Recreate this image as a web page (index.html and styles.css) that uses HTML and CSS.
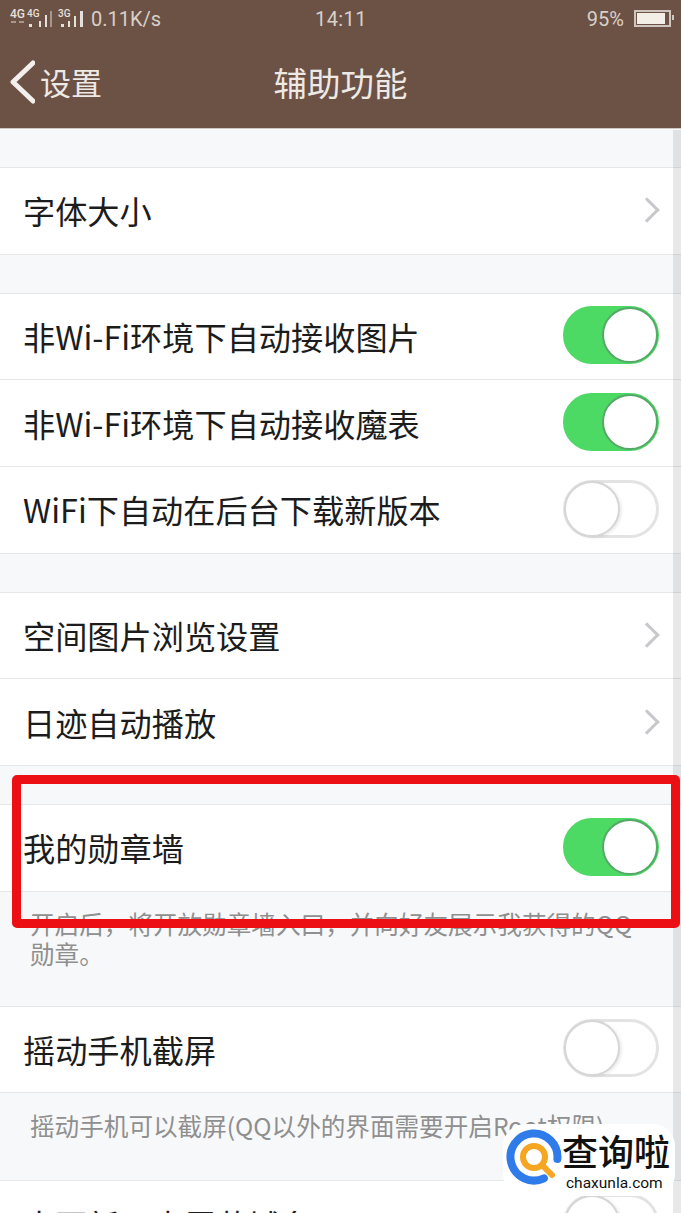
FILE: index.html
```html
<!DOCTYPE html>
<html lang="zh-CN">
<head>
  <meta charset="UTF-8" />
  <meta name="viewport" content="width=device-width, initial-scale=1.0"/>
  <title>辅助功能</title>
  <link rel="stylesheet" href="styles.css">
</head>
<body>

<header class="topbar">
  <div class="status">
    <div class="status-left">
      <svg class="signal" width="76" height="22" viewBox="0 -1 76 22">
        <text x="0" y="9" class="net">4G</text>
        <text x="17" y="8" class="net net-small">4G</text>
        <text x="48" y="8" class="net net-small">3G</text>
        <path d="M1 13h5M9 13h5" stroke="#a8978c" stroke-width="2"/>
        <g fill="#e6e0db">
          <rect x="19" y="15" width="3" height="3"/>
          <rect x="29" y="12" width="2" height="6"/>
          <rect x="35" y="6" width="2" height="12"/>
          <rect x="40" y="2" width="2" height="16" fill="#a8978c"/>
          <rect x="51" y="15" width="3" height="3"/>
          <rect x="58" y="12" width="2" height="6"/>
          <rect x="64" y="7" width="2" height="11"/>
          <rect x="70" y="2" width="3" height="16"/>
        </g>
      </svg>
      <span class="speed">0.11K/s</span>
    </div>
    <span class="clock">14:11</span>
    <div class="status-right">
      <span class="battery-text">95%</span>
      <span class="battery"><span class="battery-fill"></span></span>
    </div>
  </div>
  <div class="navbar">
    <div class="back">
      <svg width="26" height="44" viewBox="0 0 26 44"><path d="M24 3 L4 22 L24 41" fill="none" stroke="#f2efec" stroke-width="5" stroke-linecap="round" stroke-linejoin="round"/></svg>
      <span>设置</span>
    </div>
    <h1 class="title">辅助功能</h1>
  </div>
</header>

<main class="content">
  <section class="group">
    <div class="row"><span>字体大小</span><i class="chevron"></i></div>
  </section>

  <section class="group">
    <div class="row"><span>非Wi-Fi环境下自动接收图片</span><i class="switch on"></i></div>
    <div class="row"><span>非Wi-Fi环境下自动接收魔表</span><i class="switch on"></i></div>
    <div class="row"><span>WiFi下自动在后台下载新版本</span><i class="switch"></i></div>
  </section>

  <section class="group">
    <div class="row"><span>空间图片浏览设置</span><i class="chevron"></i></div>
    <div class="row"><span>日迹自动播放</span><i class="chevron"></i></div>
  </section>

  <section class="group">
    <div class="row"><span>我的勋章墙</span><i class="switch on"></i></div>
    <p class="note">开启后，将开放勋章墙入口，并向好友展示我获得的QQ勋章。</p>
  </section>

  <section class="group">
    <div class="row"><span>摇动手机截屏</span><i class="switch"></i></div>
    <p class="note note-short">摇动手机可以截屏(QQ以外的界面需要开启Root权限)</p>
  </section>

  <section class="group">
    <div class="row"><span>去更新不去屏幕域名</span><i class="switch"></i></div>
  </section>
</main>

<div class="scrollbar"></div>
<div class="highlight"></div>

<div class="watermark">
  <svg width="58" height="58" viewBox="0 0 58 58">
    <path d="M52.4 31 A23.5 23.5 0 1 0 38.9 50.3" fill="none" stroke="#2f7bea" stroke-width="8" stroke-linecap="round"/>
    <circle cx="29" cy="29" r="11" fill="#fff" stroke="#f5a623" stroke-width="6"/>
    <path d="M37 37 L47 47" stroke="#f5a623" stroke-width="6" stroke-linecap="round"/>
  </svg>
  <div class="wm-text">
    <strong>查询啦</strong>
    <span>chaxunla.com</span>
  </div>
</div>

</body>
</html>
```

FILE: styles.css
```css
html, body {
  margin: 0;
  padding: 0;
}

body {
  position: relative;
  height: 1213px;
  overflow: hidden;
  background-color: #f7f8fa;
  font-family: "Noto Sans CJK SC", "Liberation Sans", sans-serif;
  color: #1c1c1c;
}

/* top brown bar */
.topbar {
  height: 128px;
  background-color: #6c5245;
  border-bottom: 1px solid #cfc9c4;
  color: #eee9e5;
}

.status {
  height: 37px;
  display: grid;
  grid-template-columns: 1fr auto 1fr;
  align-items: center;
  padding: 0 4px 0 10px;
  font-family: "Roboto", "Liberation Sans", sans-serif;
  font-size: 20px;
  color: #d8d0ca;
}

.status-left {
  display: flex;
  align-items: center;
  gap: 5px;
}

.net {
  font-size: 12px;
  font-weight: 500;
  fill: #e6e0db;
}

.net-small {
  font-size: 10px;
}

.clock {
  margin-left: -5px;
  letter-spacing: 0.4px;
}

.status-right {
  display: flex;
  justify-content: flex-end;
  align-items: center;
  gap: 10px;
  padding-right: 6px;
}

.battery {
  position: relative;
  display: block;
  width: 31px;
  height: 11px;
  border: 2px solid #cfc6bf;
  padding: 1px;
}

.battery::after {
  content: "";
  position: absolute;
  right: -5px;
  top: 3px;
  width: 2px;
  height: 5px;
  background-color: #cfc6bf;
}

.battery-fill {
  display: block;
  width: 28px;
  height: 100%;
  background-color: #f3efe6;
}

.navbar {
  position: relative;
  height: 91px;
  display: flex;
  align-items: center;
  justify-content: center;
}

.title {
  margin: 0 0 2px;
  font-size: 33.5px;
  font-weight: 400;
}

.back {
  position: absolute;
  left: 9px;
  top: 22px;
  display: flex;
  align-items: center;
  gap: 5px;
  font-size: 31px;
}

/* settings list */
.content {
  padding-top: 38px;
}

.group {
  margin-bottom: 38px;
}

.group:has(.note) {
  margin-bottom: 0;
}

.row {
  box-sizing: border-box;
  height: 86.67px;
  display: flex;
  align-items: center;
  justify-content: space-between;
  padding: 0 22px 1px 23px;
  background-color: #fff;
  border-top: 1px solid #e6e7e9;
  font-size: 32.2px;
}

.group > .row:last-of-type {
  height: 87.67px;
  border-bottom: 1px solid #e6e7e9;
}

.note {
  margin: 0;
  padding: 16px 40px 38px 30px;
  font-size: 24.6px;
  line-height: 30px;
  color: #8f8f8f;
}

.note-short {
  padding: 17px 0 40px 30px;
  white-space: nowrap;
}

.chevron {
  width: 15px;
  height: 15px;
  margin-right: 3px;
  border-top: 3px solid #c8c8cc;
  border-right: 3px solid #c8c8cc;
  transform: rotate(45deg);
}

.switch {
  position: relative;
  box-sizing: border-box;
  width: 96px;
  height: 58px;
  margin-bottom: 1px;
  border-radius: 29px;
  border: 3px solid #e3e3e3;
  background-color: #fff;
}

.switch::after {
  content: "";
  position: absolute;
  left: -2px;
  top: -2px;
  width: 56px;
  height: 56px;
  box-sizing: border-box;
  border-radius: 50%;
  background-color: #fff;
  border: 2px solid #d6d6d6;
  box-shadow: 2px 1px 3px rgba(0, 0, 0, 0.08);
}

.switch.on {
  background-color: #4cd964;
  border-color: #4cd964;
}

.switch.on::after {
  left: auto;
  right: -2px;
  border-color: #55a868;
  box-shadow: none;
}

/* things on top of the page */
.scrollbar {
  position: absolute;
  right: 0;
  top: 130px;
  bottom: 0;
  width: 8px;
  background-color: rgba(0, 0, 0, 0.09);
}

.highlight {
  position: absolute;
  left: 12px;
  top: 775px;
  width: 668px;
  height: 153px;
  box-sizing: border-box;
  border: 9px solid #ec1015;
  border-radius: 5px;
}

.watermark {
  position: absolute;
  left: 503px;
  top: 1124px;
  width: 172px;
  height: 72px;
  box-sizing: border-box;
  padding: 4px 0 0 2px;
  display: flex;
  gap: 0;
  background-color: #fff;
  border-radius: 22px;
}

.wm-text {
  margin-left: -1px;
  display: flex;
  flex-direction: column;
}

.wm-text strong {
  font-family: "Noto Sans CJK SC", sans-serif;
  font-size: 36px;
  line-height: 44px;
  font-weight: 500;
  color: #111;
}

.wm-text span {
  margin-left: 4px;
  font-family: "Roboto", "Liberation Sans", sans-serif;
  font-size: 15.5px;
  line-height: 22px;
  color: #111;
}
```
